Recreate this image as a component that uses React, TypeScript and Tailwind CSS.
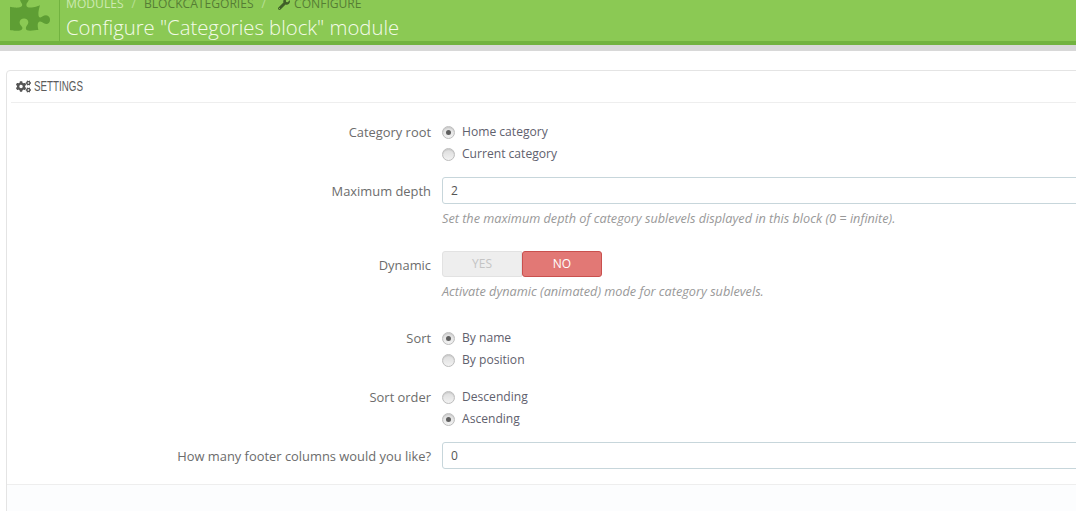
import { FaCogs, FaPuzzlePiece, FaWrench } from 'react-icons/fa'

const font = { fontFamily: '"Open Sans", "Liberation Sans", sans-serif' }

function Radio({ label, checked }: { label: string; checked?: boolean }) {
  return (
    <div className="flex h-[22px] items-center">
      <span className="flex h-[13px] w-[13px] items-center justify-center rounded-full border border-[#bdbdbd] bg-gradient-to-b from-[#dcdcdc] to-[#f2f2f2] shadow-[inset_0_1px_1px_rgba(0,0,0,0.1)]">
        {checked && <span className="h-[5px] w-[5px] rounded-full bg-[#5e5e5e]" />}
      </span>
      <span className="ml-[7px] text-[12.1px] leading-none text-[#5f616e]">{label}</span>
    </div>
  )
}

function Row({ label, className, labelClass, children }: { label: string; className?: string; labelClass?: string; children: React.ReactNode }) {
  return (
    <div className={`flex ${className ?? ''}`}>
      <div className={`w-[435px] shrink-0 pr-[11px] text-right text-[12.9px] text-[#6c6c6c] ${labelClass ?? 'leading-[22px]'}`}>{label}</div>
      <div className="flex-1">{children}</div>
    </div>
  )
}

function TextBox({ value }: { value: string }) {
  return (
    <div className="flex h-[27px] items-center rounded-[3px] border border-[#c7d6db] bg-white px-[8px] text-[12px] text-[#555555]">
      {value}
    </div>
  )
}

function Help({ children }: { children: React.ReactNode }) {
  return <p className="mt-[6px] text-[12.7px] italic leading-[16px] text-[#999999]">{children}</p>
}

export default function App() {
  return (
    <div className="h-[511px] w-[1076px] overflow-hidden bg-white" style={font}>
      {/* Page head */}
      <div className="h-[45px] overflow-hidden border-b-[4px] border-[#72b340] bg-[#8bc954]">
        <div className="flex h-[41px]">
          <div className="flex w-[59px] shrink-0 justify-center">
            <FaPuzzlePiece className="-mt-[7px] h-[40px] w-[40px] text-[#5e9e34]" />
          </div>
          <div className="border-l border-[#72b340] pl-[6px]">
            <div className="-mt-[4px] flex h-[16px] items-center text-[12.1px] uppercase text-[#e3f3d4]">
              <span className="text-[#cde9b2]">Modules</span>
              <span className="mx-[8px] text-[#b9e095]">/</span>
              <span className="text-[#567d34]">Blockcategories</span>
              <span className="mx-[8px] text-[#b9e095]">/</span>
              <FaWrench className="ml-[4px] mr-[4px] h-[12px] w-[12px] text-[#3f5f28]" />
              <span className="text-[#567d34]">Configure</span>
            </div>
            <h1 className="mt-[3px] text-[20.3px] font-light leading-[24px] text-[#f4fbe9]">Configure "Categories block" module</h1>
          </div>
        </div>
      </div>
      <div className="h-[6px] bg-[#d8d8d8]" />

      {/* Settings panel */}
      <div className="ml-[6px] mt-[19px] w-[1100px] rounded-[4px] border border-[#e4e4e4] bg-white">
        <div className="mx-[4px] flex h-[32px] items-center gap-[3px] border-b border-[#eeeeee] pb-[1px] pl-[5px]">
          <FaCogs className="h-[15px] w-[15px] text-[#555555]" />
          <span className="origin-left scale-x-[0.7] text-[14px] uppercase text-[#5c5c5c]" style={{ fontFamily: '"Liberation Sans", sans-serif' }}>
            Settings
          </span>
        </div>

        <div className="h-[381px] pt-[18px]">
          <Row label="Category root">
            <Radio label="Home category" checked />
            <Radio label="Current category" />
          </Row>
          <Row label="Maximum depth" className="mt-[12px]" labelClass="leading-[28px]">
            <TextBox value="2" />
            <Help>Set the maximum depth of category sublevels displayed in this block (0 = infinite).</Help>
          </Row>
          <Row label="Dynamic" className="mt-[25px]" labelClass="leading-[28px]">
            <div className="flex h-[26px] w-[160px] text-[12px] uppercase">
              <div className="flex w-[80px] items-center justify-center rounded-l-[3px] border border-[#e2e2e2] bg-[#eeeeee] text-[#c4c4c4]">Yes</div>
              <div className="flex w-[80px] items-center justify-center rounded-[3px] border border-[#c9504e] bg-[#e27875] text-white">No</div>
            </div>
            <Help>Activate dynamic (animated) mode for category sublevels.</Help>
          </Row>
          <Row label="Sort" className="mt-[28px]">
            <Radio label="By name" checked />
            <Radio label="By position" />
          </Row>
          <Row label="Sort order" className="mt-[15px]">
            <Radio label="Descending" />
            <Radio label="Ascending" checked />
          </Row>
          <Row label="How many footer columns would you like?" className="mt-[12px]" labelClass="leading-[28px]">
            <TextBox value="0" />
          </Row>
        </div>

        <div className="h-[40px] border-t border-[#eeeeee] bg-[#fcfdfe]" />
      </div>
    </div>
  )
}
